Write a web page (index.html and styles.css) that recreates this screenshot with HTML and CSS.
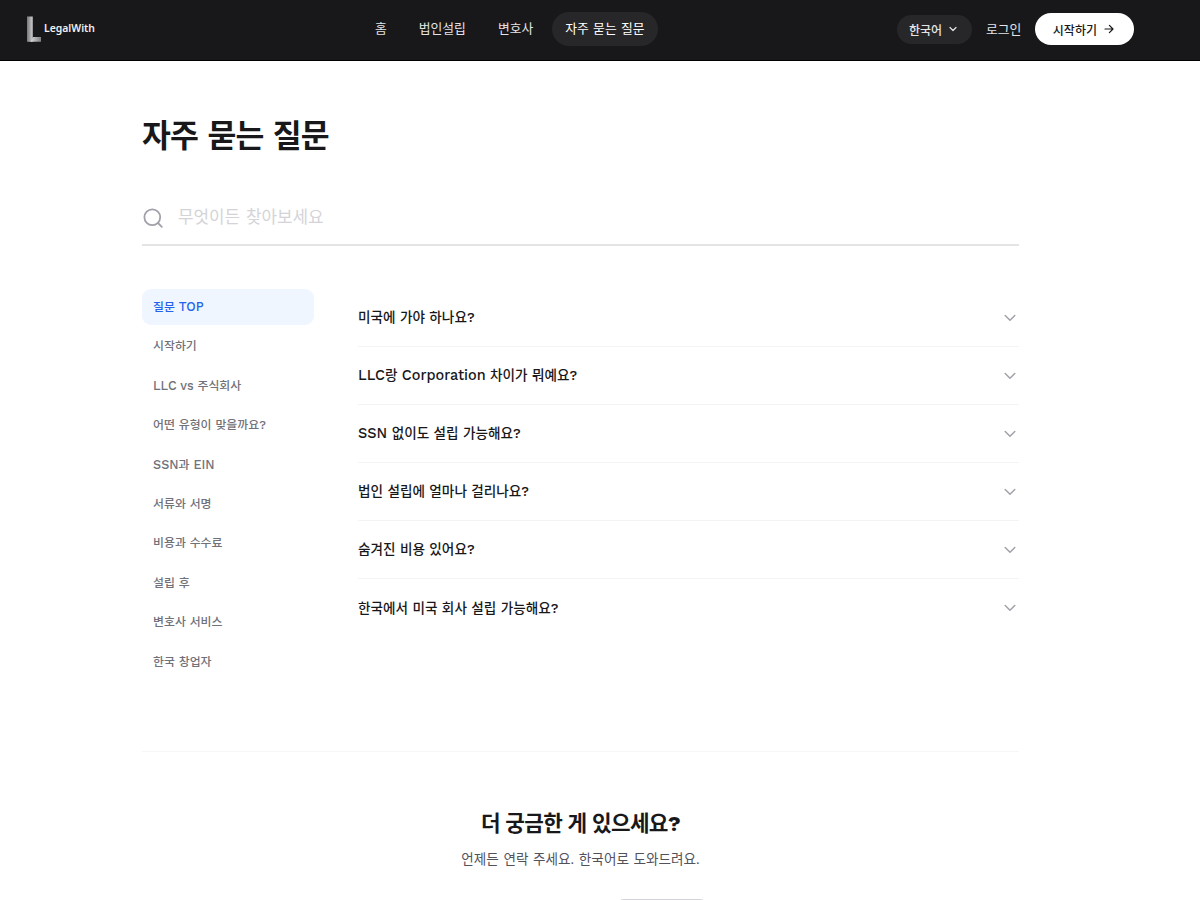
FILE: index.html
```html
<!DOCTYPE html>
<html lang="ko">
<head>
    <meta charset="UTF-8">
    <meta name="viewport" content="width=device-width, initial-scale=1.0">
    <title>자주 묻는 질문 - LegalWith</title>
    <link rel="stylesheet" href="styles.css">
</head>
<body>

<header class="header">
    <a class="logo" href="#">
        <svg width="15" height="26" viewBox="0 0 15 26">
            <defs>
                <linearGradient id="stem" x1="0" x2="1">
                    <stop offset="0" stop-color="#77777a"/>
                    <stop offset="0.75" stop-color="#bcbcbe"/>
                    <stop offset="1" stop-color="#8a8a8c"/>
                </linearGradient>
                <linearGradient id="foot" x1="0" x2="1">
                    <stop offset="0" stop-color="#d8d8d8"/>
                    <stop offset="1" stop-color="#808083"/>
                </linearGradient>
            </defs>
            <rect y=".5" width="6" height="25.300" fill="url(#stem)"/>
            <path d="M3.500 25.800L6 21h8v4.800z" fill="url(#foot)"/>
        </svg>
        <span>LegalWith</span>
    </a>
    <nav class="nav">
        <a href="#">홈</a>
        <a href="#">법인설립</a>
        <a href="#">변호사</a>
        <a class="active" href="#">자주 묻는 질문</a>
    </nav>
    <div class="actions">
        <button class="lang">한국어
            <svg width="8" height="8" viewBox="0 0 8 8"><path d="M1 2.500l3 3 3-3"/></svg>
        </button>
        <a class="login" href="#">로그인</a>
        <a class="start" href="#">시작하기
            <svg width="10" height="10" viewBox="0 0 10 10"><path d="M1 5h8M5.400 1.400L9 5 5.400 8.600"/></svg>
        </a>
    </div>
</header>

<main class="page">
    <h1>자주 묻는 질문</h1>

    <div class="search">
        <svg width="22" height="22" viewBox="0 0 22 22"><circle cx="10.300" cy="10.300" r="7.900"/><path d="M16 16l3.800 3.800"/></svg>
        <input type="text" placeholder="무엇이든 찾아보세요">
    </div>

    <div class="content">
        <aside class="categories">
            <a class="active" href="#">질문 <span class="en">TOP</span></a>
            <a href="#">시작하기</a>
            <a href="#"><span class="en">LLC vs</span> 주식회사</a>
            <a href="#">어떤 유형이 맞을까요?</a>
            <a href="#"><span class="en">SSN</span>과 <span class="en">EIN</span></a>
            <a href="#">서류와 서명</a>
            <a href="#">비용과 수수료</a>
            <a href="#">설립 후</a>
            <a href="#">변호사 서비스</a>
            <a href="#">한국 창업자</a>
        </aside>

        <div class="questions">
            <button><span>미국에 가야 하나요?</span>
                <svg width="12" height="8" viewBox="0 0 12 8"><path d="M1.200 1.500L6 6.200l4.800-4.700"/></svg>
            </button>
            <button><span><span class="en">LLC</span>랑 <span class="en">Corporation</span> 차이가 뭐예요?</span>
                <svg width="12" height="8" viewBox="0 0 12 8"><path d="M1.200 1.500L6 6.200l4.800-4.700"/></svg>
            </button>
            <button><span><span class="en">SSN</span> 없이도 설립 가능해요?</span>
                <svg width="12" height="8" viewBox="0 0 12 8"><path d="M1.200 1.500L6 6.200l4.800-4.700"/></svg>
            </button>
            <button><span>법인 설립에 얼마나 걸리나요?</span>
                <svg width="12" height="8" viewBox="0 0 12 8"><path d="M1.200 1.500L6 6.200l4.800-4.700"/></svg>
            </button>
            <button><span>숨겨진 비용 있어요?</span>
                <svg width="12" height="8" viewBox="0 0 12 8"><path d="M1.200 1.500L6 6.200l4.800-4.700"/></svg>
            </button>
            <button><span>한국에서 미국 회사 설립 가능해요?</span>
                <svg width="12" height="8" viewBox="0 0 12 8"><path d="M1.200 1.500L6 6.200l4.800-4.700"/></svg>
            </button>
        </div>
    </div>

    <section class="contact">
        <h2>더 궁금한 게 있으세요?</h2>
        <p>언제든 연락 주세요. 한국어로 도와드려요.</p>
        <div class="contact-buttons">
            <button class="mail"></button>
            <button class="chat"></button>
        </div>
    </section>
</main>

</body>
</html>
```

FILE: styles.css
```css
* {
    box-sizing: border-box;
}

body {
    margin: 0;
    height: 900px;
    overflow: hidden;
    background: #fff;
    color: #18181b;
    font-family: "Work Sans", Inter, "Noto Sans CJK KR", sans-serif;
}

a {
    color: inherit;
    text-decoration: none;
}

button {
    border: none;
    background: none;
    color: inherit;
    font-family: inherit;
}

svg {
    flex: none;
    fill: none;
    stroke: currentColor;
    stroke-linecap: round;
    stroke-linejoin: round;
}

.en {
    font-size: 1.065em;
    line-height: 1;
}

/* header */
.header {
    display: grid;
    grid-template-columns: 334.5px 1fr auto;
    align-items: center;
    height: 61px;
    padding: 0 66px 2px 27px;
    background: #18181a;
    border-bottom: 1px solid #000;
    color: #e4e4e7;
    font-size: 12.8px;
}

.logo {
    display: flex;
    align-items: center;
    gap: 2px;
    color: #f0f0f0;
    font-family: "Noto Sans", sans-serif;
    font-size: 10.4px;
    font-weight: 600;
}

.logo span {
    line-height: 14px;
    padding-bottom: 2px;
}

.logo svg {
    stroke: none;
}

.nav {
    display: flex;
    gap: 5px;
}

.nav a {
    padding: 0 13.5px;
    border-radius: 17px;
    line-height: 33.5px;
}

.nav .active {
    background: #27272a;
    color: #fff;
}

.actions {
    display: flex;
    align-items: center;
    gap: 14px;
}

.lang {
    display: flex;
    align-items: center;
    gap: 7px;
    height: 29px;
    padding: 0 15px 0 12px;
    border-radius: 15px;
    background: #27272a;
    font-size: 12px;
    font-weight: 500;
}

.login {
    padding-bottom: 1px;
}

.start {
    display: flex;
    align-items: center;
    gap: 7px;
    height: 32px;
    padding: 0 20px 0 17.5px;
    border-radius: 16px;
    background: #fff;
    color: #18181b;
    font-size: 12px;
    font-weight: 500;
}

.lang svg,
.start svg {
    stroke-width: 1.2;
}

/* page */
.page {
    width: 877px;
    margin-left: 142px;
    padding-top: 51px;
}

h1 {
    margin: 0;
    font-size: 31.4px;
    line-height: 50px;
    font-weight: 700;
    letter-spacing: -0.025em;
    word-spacing: 1px;
}

.search {
    display: flex;
    align-items: center;
    gap: 14px;
    height: 55px;
    margin-top: 29px;
    border-bottom: 2px solid #e4e4e7;
    color: #a1a1aa;
}

.search svg {
    stroke-width: 1.8;
}

.search input {
    flex: 1;
    padding: 0 0 2px;
    border: none;
    outline: none;
    font-family: inherit;
    font-size: 16.9px;
}

.search input::placeholder {
    color: #d4d4d8;
}

.content {
    display: grid;
    grid-template-columns: 172px 1fr;
    gap: 44px;
    margin-top: 43px;
    padding-bottom: 72px;
    border-bottom: 1px solid #f6f6f7;
}

.categories {
    display: flex;
    flex-direction: column;
    gap: 3.9px;
    color: #71717a;
    font-size: 11.9px;
    font-weight: 500;
}

.categories a {
    height: 35.5px;
    padding: 1px 0 0 11px;
    border-radius: 9px;
    line-height: 35.5px;
}

.categories .active {
    background: #eff6ff;
    color: #2563eb;
}

.questions button {
    display: flex;
    align-items: center;
    justify-content: space-between;
    width: 100%;
    height: 58px;
    padding: 0 3.5px 0 0;
    border-bottom: 1px solid #f4f4f5;
    font-size: 13.6px;
    font-weight: 500;
}

.questions button:last-child {
    border-bottom: none;
}

.questions button > span {
    padding-bottom: 3px;
}

.questions svg {
    color: #a1a1aa;
    stroke-width: 1.5;
}

/* contact */
.contact {
    display: flex;
    flex-direction: column;
    align-items: center;
    padding-top: 55px;
}

.contact h2 {
    margin: 0;
    font-size: 21.3px;
    line-height: 34px;
    font-weight: 700;
    letter-spacing: -0.03em;
}

.contact p {
    margin: 7px 0 27px;
    color: #52525b;
    font-size: 13.6px;
    line-height: 23px;
}

.contact-buttons {
    display: flex;
    gap: 12px;
    padding: 1px 0 0 1px;
}

.contact-buttons button {
    height: 40px;
    border-radius: 8px;
}

.mail {
    width: 150px;
}

.chat {
    width: 92px;
    border: 1px solid #d4d4d8;
}
```
